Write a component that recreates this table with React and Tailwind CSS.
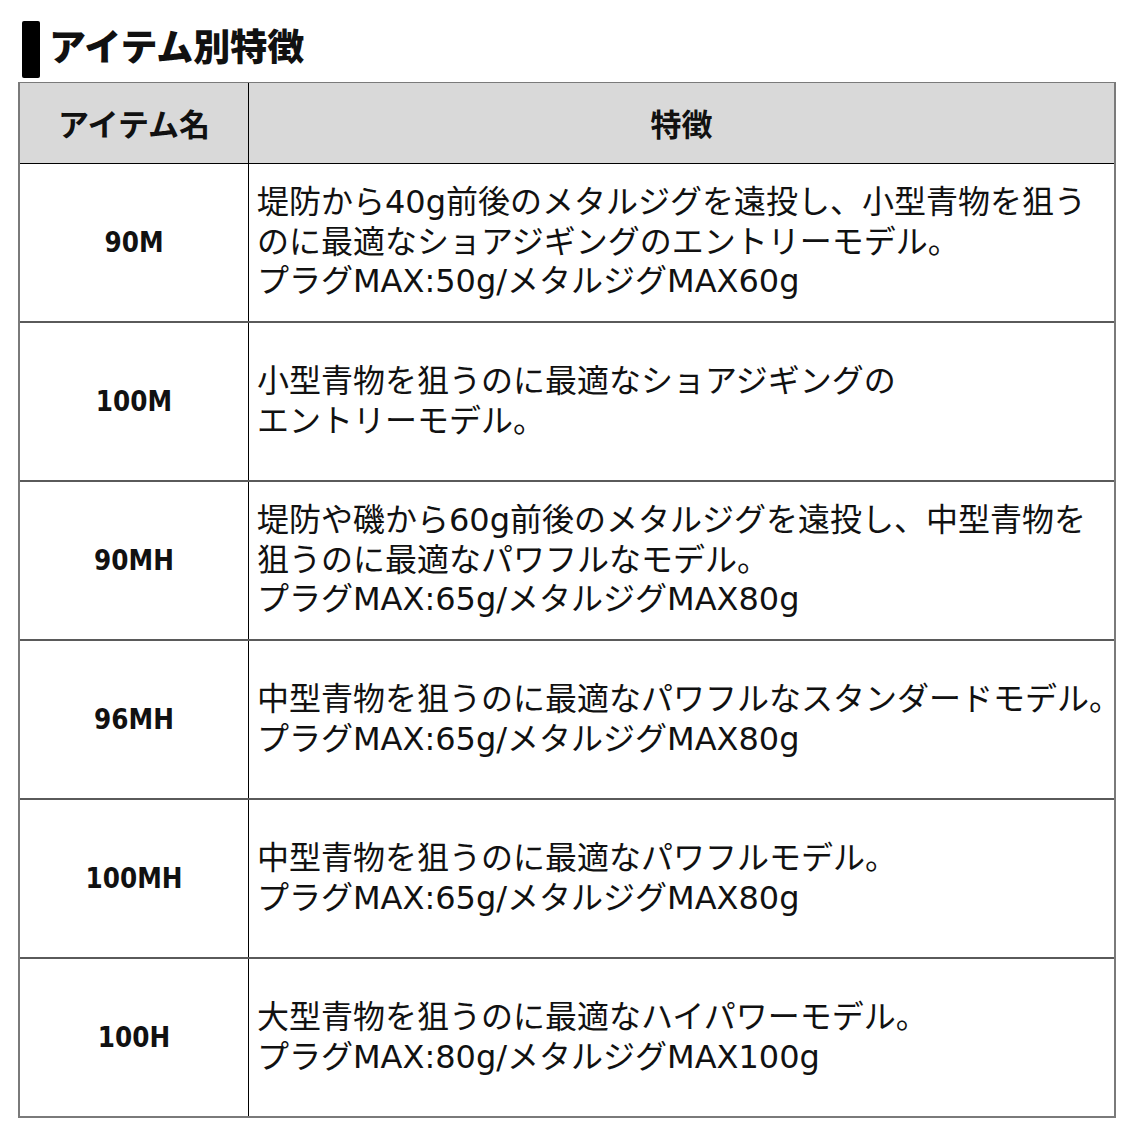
import React from 'react';

const rows = [
  {
    name: '90M',
    lines: [
      '堤防から40g前後のメタルジグを遠投し、小型青物を狙う',
      'のに最適なショアジギングのエントリーモデル。',
      'プラグMAX:50g/メタルジグMAX60g',
    ],
  },
  {
    name: '100M',
    lines: ['小型青物を狙うのに最適なショアジギングの', 'エントリーモデル。'],
  },
  {
    name: '90MH',
    lines: [
      '堤防や磯から60g前後のメタルジグを遠投し、中型青物を',
      '狙うのに最適なパワフルなモデル。',
      'プラグMAX:65g/メタルジグMAX80g',
    ],
  },
  {
    name: '96MH',
    lines: ['中型青物を狙うのに最適なパワフルなスタンダードモデル。', 'プラグMAX:65g/メタルジグMAX80g'],
  },
  {
    name: '100MH',
    lines: ['中型青物を狙うのに最適なパワフルモデル。', 'プラグMAX:65g/メタルジグMAX80g'],
  },
  {
    name: '100H',
    lines: ['大型青物を狙うのに最適なハイパワーモデル。', 'プラグMAX:80g/メタルジグMAX100g'],
  },
];

const jp = { fontFamily: '"Noto Sans CJK JP", sans-serif' };
const body = { fontFamily: '"DejaVu Sans", "Noto Sans CJK JP", sans-serif' };
const label = { fontFamily: '"DejaVu Sans Condensed", "DejaVu Sans", sans-serif', fontStretch: 'condensed' };

const App = () => {
  return (
    <div className="w-[1134px] h-[1134px] bg-white pt-[21px] px-[18px]">
      {/* Heading */}
      <div className="flex items-center h-[57px] pl-[4px]">
        <div className="w-[18px] h-[57px] bg-black rounded-[2px]" />
        <h2 className="ml-[9px] text-[37px] font-black text-[#111] leading-none -mt-[8px]" style={jp}>
          アイテム別特徴
        </h2>
      </div>

      {/* Table */}
      <div className="mt-[4px] w-[1098px] border-l-2 border-r-2 border-t border-[#7a7a7a] border-b-2">
        <div className="grid grid-cols-[229px_1fr] h-[81px] bg-[#d9d9d9] border-b border-black">
          <div className="flex items-center justify-center border-r border-black text-[31px] font-bold text-[#111]" style={jp}>
            アイテム名
          </div>
          <div className="flex items-center justify-center text-[31px] font-bold text-[#111]" style={jp}>
            特徴
          </div>
        </div>

        {rows.map((row, i) => (
          <div
            key={row.name}
            className={`grid grid-cols-[229px_1fr] ${i < rows.length - 1 ? 'h-[159px] border-b-2 border-[#5a5a5a]' : 'h-[157px]'}`}
          >
            <div className="flex items-center justify-center border-r border-black text-[27.5px] font-bold text-[#111]" style={label}>
              {row.name}
            </div>
            <div className="flex flex-col justify-center pl-[8px] text-[32px] leading-[39.5px] text-[#111] whitespace-nowrap" style={body}>
              {row.lines.map((l) => (
                <span key={l}>{l}</span>
              ))}
            </div>
          </div>
        ))}
      </div>
    </div>
  );
};

export default App;
